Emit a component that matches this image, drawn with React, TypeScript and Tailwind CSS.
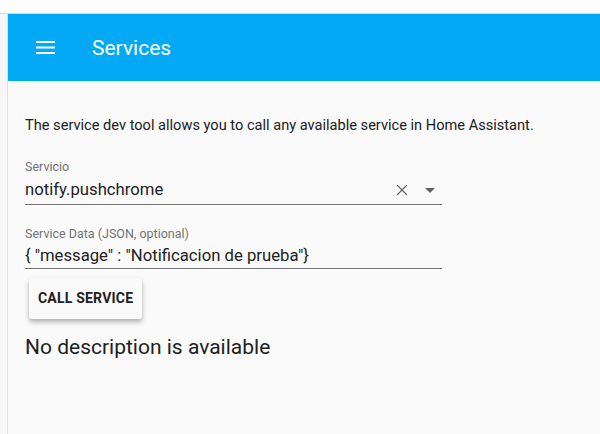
import { X } from "lucide-react"

export default function App() {
  return (
    <div className="w-[600px] h-[434px] overflow-hidden bg-white flex flex-col font-['Roboto',sans-serif]">
      {/* cut-off browser strip */}
      <div className="h-[14px] shrink-0 bg-white border-b border-[#d6d6d6]" />
      <div className="flex flex-1 min-h-0">
        {/* sidebar edge */}
        <div className="w-[8px] shrink-0 bg-[#f7f7f7] border-r border-[#e0e0e0]" />
        <div className="flex-1 flex flex-col bg-[#fafafa]">
          {/* toolbar */}
          <div className="h-[67px] shrink-0 bg-[#03a9f4] flex items-center text-white">
            <div className="w-[84px] pl-[28px]">
              <svg width="19" height="13" viewBox="0 0 19 13" fill="white">
                <rect x="0" y="0" width="19" height="2" />
                <rect x="0" y="5.5" width="19" height="2" />
                <rect x="0" y="11" width="19" height="2" />
              </svg>
            </div>
            <h1 className="text-[21px] leading-none pt-[2px]">Services</h1>
          </div>

          {/* content */}
          <div className="pl-[17px] pt-[34px]">
            <p className="text-[14.6px] text-[#212121] leading-[20px] whitespace-nowrap">
              The service dev tool allows you to call any available service in Home Assistant.
            </p>

            <div className="w-[417px]">
              <div className="mt-[24px] border-b border-[#757575] pb-[3px]">
                <div className="text-[12.5px] text-[#737373] leading-[16px]">Servicio</div>
                <div className="mt-[4px] flex items-center">
                  <span className="flex-1 text-[16.7px] text-[#212121] leading-[22px]">notify.pushchrome</span>
                  <X className="w-[18px] h-[18px] text-[#616161] mr-[14px]" strokeWidth={1.5} />
                  <svg width="10" height="5" viewBox="0 0 10 5" className="mr-[7px]">
                    <path d="M0 0 L10 0 L5 5 Z" fill="#616161" />
                  </svg>
                </div>
              </div>

              <div className="mt-[21px] border-b border-[#757575] pb-[1px]">
                <div className="text-[12.5px] text-[#737373] leading-[16px]">Service Data (JSON, optional)</div>
                <div className="mt-[3px] text-[16.7px] text-[#212121] leading-[22px]">{'{ "message" : "Notificacion de prueba"}'}</div>
              </div>
            </div>

            <button className="mt-[9px] ml-[4px] h-[41px] px-[9px] bg-[#fafafa] rounded-[3px] shadow-[0_3px_5px_rgba(0,0,0,0.3)] text-[14px] font-bold text-[#212121] tracking-[0.2px]">
              CALL SERVICE
            </button>

            <h2 className="mt-[15px] text-[21px] text-[#212121] leading-[26px]">No description is available</h2>
          </div>
        </div>
      </div>
    </div>
  )
}
